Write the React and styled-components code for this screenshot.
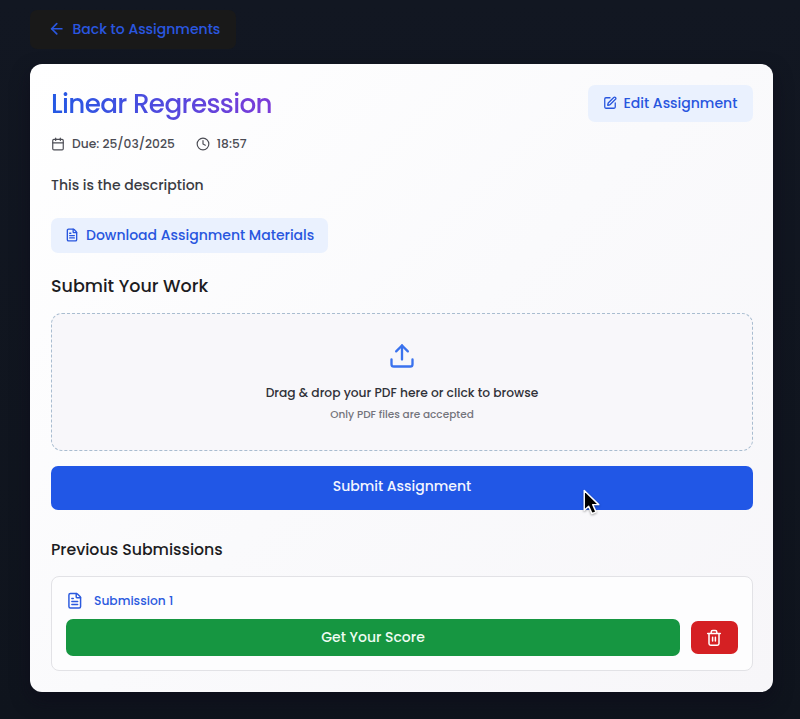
import React from "react";
import styled, { createGlobalStyle } from "styled-components";
import { ArrowLeft, Calendar, Clock, FileText, SquarePen, Upload } from "lucide-react";

const GlobalStyle = createGlobalStyle`
  *, *::before, *::after { box-sizing: border-box; }
  body {
    margin: 0;
    background: #111620;
    font-family: Poppins, Inter, sans-serif;
    font-weight: 500;
    color: #1c1c22;
    overflow: hidden;
  }
  h1, h2, p { margin: 0; font-weight: 500; }
  svg { flex: none; display: block; }
`;

const Page = styled.main`
  height: 719px;
  padding: 10px 27px 0 30px;
  background: linear-gradient(180deg, #121722 0%, #0f141d 100%);
`;

const Button = styled.button`
  display: flex;
  align-items: center;
  border: 0;
  font-family: inherit;
  font-size: 14px;
  font-weight: 500;
  line-height: 20px;
  white-space: nowrap;
  cursor: pointer;
`;

const BackButton = styled(Button)`
  width: 206px;
  height: 39px;
  padding: 0 0 1px 18px;
  gap: 7px;
  border-radius: 7px;
  background: #191919;
  color: #2a57e0;
`;

const Card = styled.section`
  margin-top: 15px;
  height: 628px;
  padding: 21px 20px 0 21px;
  border-radius: 12px;
  background: linear-gradient(135deg, #ffffff 0%, #fafafc 50%, #f7f6f9 100%);
  box-shadow: 0 8px 18px rgba(12, 8, 24, 0.5);
`;

const Header = styled.header`
  display: flex;
  align-items: center;
  justify-content: space-between;
  height: 37px;
`;

const Title = styled.h1`
  font-size: 26.25px;
  line-height: 36px;
  letter-spacing: -0.025em;
  color: transparent;
  background: linear-gradient(90deg, #2459e4, #7c3bd8);
  background-clip: text;
  -webkit-background-clip: text;
`;

const SoftButton = styled(Button)`
  width: ${(p) => p.$width}px;
  height: ${(p) => p.$height}px;
  padding: 0 0 ${(p) => p.$lift || 0}px ${(p) => p.$inset}px;
  gap: 7px;
  border-radius: 7px;
  background: #eaf1fe;
  color: #2856de;
`;

const Meta = styled.div`
  display: flex;
  align-items: center;
  gap: 21px;
  height: 20px;
  margin-top: 12px;
  color: #4b4c54;
  font-size: 12.25px;
`;

const MetaItem = styled.span`
  display: flex;
  align-items: center;
  gap: 7px;
`;

const Description = styled.p`
  margin: 21px 0 23px;
  font-size: 14px;
  line-height: 20px;
  color: #3a3b42;
`;

const SectionTitle = styled.h2`
  margin-top: ${(p) => p.$top}px;
  font-size: ${(p) => p.$size}px;
  line-height: 24px;
`;

const DropZone = styled.div`
  display: flex;
  flex-direction: column;
  align-items: center;
  height: 138px;
  margin: 15px 0 15px;
  padding-top: 28px;
  border-radius: 11px;
  border: 1px dashed #a9bdd0;
  background: #f8f7fa;
  color: #3a72ee;
`;

const DropText = styled.p`
  margin-top: 13px;
  font-size: 12.25px;
  line-height: 20px;
  color: #303138;
`;

const DropHint = styled.p`
  margin-top: 2px;
  font-size: 10.5px;
  line-height: 20px;
  color: #74747c;
`;

const SubmitButton = styled(Button)`
  justify-content: center;
  width: 100%;
  height: 44px;
  padding: 0 0 4px;
  border-radius: 7px;
  background: #2157e6;
  color: #f2f5ff;
`;

const Submission = styled.article`
  height: 95px;
  margin-top: 14px;
  padding: 14px 14px 0;
  border: 1px solid #e2e2e6;
  border-radius: 8px;
  background: #fdfdfe;
`;

const SubmissionName = styled.div`
  display: flex;
  align-items: center;
  gap: 10.5px;
  height: 20px;
  padding-bottom: 1px;
  color: #2b5ade;
  font-size: 12.25px;
`;

const Actions = styled.div`
  display: flex;
  align-items: center;
  gap: 11px;
  margin-top: 8px;
`;

const ScoreButton = styled(Button)`
  flex: 1;
  justify-content: center;
  height: 37px;
  padding: 0 0 1px;
  border-radius: 7px;
  background: #169641;
  color: #eefcf2;
`;

const DeleteButton = styled(Button)`
  justify-content: center;
  width: 47px;
  height: 33px;
  padding: 0 1px 0 0;
  border-radius: 7px;
  background: #d52023;
  color: #ffffff;
`;

const Pointer = styled.svg`
  position: absolute;
  left: 581px;
  top: 488px;
  filter: drop-shadow(0 1px 1px rgba(0, 0, 0, 0.35));
`;

function TrashIcon() {
  return (
    <svg width="16" height="18" viewBox="0 0 16 18" fill="none" stroke="currentColor" strokeWidth="1.5" strokeLinecap="round" strokeLinejoin="round">
      <path d="M1.7 4.5h12.6M3 4.5v10a1.7 1.7 0 0 0 1.7 1.7h6.6a1.7 1.7 0 0 0 1.7-1.7v-10M5.2 4.3V3a1.5 1.5 0 0 1 1.5-1.5h2.6a1.5 1.5 0 0 1 1.5 1.5v1.3M6.6 8.3v3.8M9.4 8.3v3.8" />
    </svg>
  );
}

export default function App() {
  return (
    <>
      <GlobalStyle />
      <Page>
        <BackButton><ArrowLeft size={17.5} strokeWidth={2.3} />Back to Assignments</BackButton>
        <Card>
          <Header>
            <Title>Linear Regression</Title>
            <SoftButton $width={165} $height={37} $lift={1} $inset={14.5}><SquarePen size={14} strokeWidth={2.2} />Edit Assignment</SoftButton>
          </Header>
          <Meta>
            <MetaItem><Calendar size={14} />Due: 25/03/2025</MetaItem>
            <MetaItem><Clock size={14} />18:57</MetaItem>
          </Meta>
          <Description>This is the description</Description>
          <SoftButton $width={277} $height={35} $lift={1} $inset={14}><FileText size={14} strokeWidth={2.3} />Download Assignment Materials</SoftButton>
          <SectionTitle $top={21} $size={17.5}>Submit Your Work</SectionTitle>
          <DropZone>
            <Upload size={28} strokeWidth={2} />
            <DropText>Drag &amp; drop your PDF here or click to browse</DropText>
            <DropHint>Only PDF files are accepted</DropHint>
          </DropZone>
          <SubmitButton>Submit Assignment</SubmitButton>
          <SectionTitle $top={28} $size={15.75}>Previous Submissions</SectionTitle>
          <Submission>
            <SubmissionName><FileText size={17.5} strokeWidth={2} />Submission 1</SubmissionName>
            <Actions>
              <ScoreButton>Get Your Score</ScoreButton>
              <DeleteButton aria-label="Delete submission"><TrashIcon /></DeleteButton>
            </Actions>
          </Submission>
        </Card>
      </Page>
      <Pointer width="20" height="29" viewBox="0 0 20 30">
        <path d="M3 2.5v20.5l4.6-4.2 3.4 7.7 4.2-1.8-3.4-7.5h6.2z" fill="#000" stroke="#fff" strokeWidth="1.5" strokeLinejoin="round" />
      </Pointer>
    </>
  );
}
